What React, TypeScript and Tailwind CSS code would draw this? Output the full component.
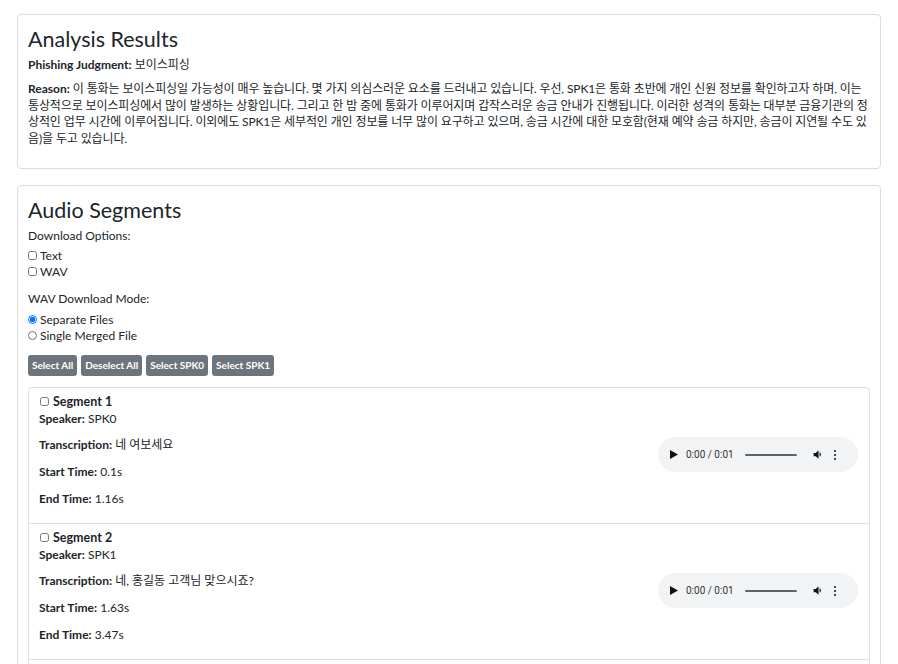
import type { ReactNode } from 'react';

const FONT = { fontFamily: 'Lato, "Noto Sans CJK KR", sans-serif' };

const REASON =
  '이 통화는 보이스피싱일 가능성이 매우 높습니다. 몇 가지 의심스러운 요소를 드러내고 있습니다. 우선, SPK1은 통화 초반에 개인 신원 정보를 확인하고자 하며, 이는 통상적으로 보이스피싱에서 많이 발생하는 상황입니다. 그리고 한 밤 중에 통화가 이루어지며 갑작스러운 송금 안내가 진행됩니다. 이러한 성격의 통화는 대부분 금융기관의 정상적인 업무 시간에 이루어집니다. 이외에도 SPK1은 세부적인 개인 정보를 너무 많이 요구하고 있으며, 송금 시간에 대한 모호함(현재 예약 송금 하지만, 송금이 지연될 수도 있음)을 두고 있습니다.';

const segments = [
  { id: 1, speaker: 'SPK0', text: '네 여보세요', start: '0.1s', end: '1.16s' },
  { id: 2, speaker: 'SPK1', text: '네, 홍길동 고객님 맞으시죠?', start: '1.63s', end: '3.47s' },
  { id: 3, speaker: 'SPK0', text: '네 맞는데요', start: '3.9s', end: '4.72s' },
];

function Card({ title, children }: { title: string; children: ReactNode }) {
  return (
    <div className="border border-[#dcdcdc] rounded-[4px] bg-white px-[10px] pt-[12px] pb-[11px]">
      <h2 className="text-[21.5px] leading-[25px] font-normal mb-[4px]">{title}</h2>
      {children}
    </div>
  );
}

function AudioPlayer() {
  return (
    <div className="flex items-center w-[200px] h-[35px] rounded-full bg-[#f1f3f4] text-[#1f1f1f]">
      <svg className="ml-[12px] w-[8px] h-[9px]" viewBox="0 0 8 9">
        <path d="M0 0 L8 4.5 L0 9 Z" fill="#111" />
      </svg>
      <span className="ml-[8px] text-[10px] leading-none text-[#333] font-['Roboto']">0:00 / 0:01</span>
      <div className="ml-[11px] w-[52px] h-[2px] bg-[#5f6368] rounded-full" />
      <svg className="ml-[15px] w-[13px] h-[13px]" viewBox="0 0 24 24">
        <path d="M3 9v6h4l5 5V4L7 9H3z" fill="#111" />
        <path d="M16.5 12c0-1.77-1.02-3.29-2.5-4.03v8.05c1.48-.73 2.5-2.25 2.5-4.02z" fill="#111" />
      </svg>
      <div className="ml-[9px] flex flex-col gap-[1.5px]">
        <span className="w-[2.5px] h-[2.5px] rounded-full bg-[#111]" />
        <span className="w-[2.5px] h-[2.5px] rounded-full bg-[#111]" />
        <span className="w-[2.5px] h-[2.5px] rounded-full bg-[#111]" />
      </div>
    </div>
  );
}

export default function App() {
  return (
    <div style={FONT} className="min-h-screen bg-white text-[#212529] text-[12px] px-[17px] pt-[14px] pb-[20px]">
      <Card title="Analysis Results">
        <p className="leading-[17px] mb-[8px]">
          <strong className="font-bold">Phishing Judgment:</strong> 보이스피싱
        </p>
        <p className="leading-[16.7px] mb-[9px] tracking-[-0.12px]">
          <strong className="font-bold tracking-normal">Reason:</strong> {REASON}
        </p>
      </Card>

      <div className="mt-[16px]">
        <Card title="Audio Segments">
          <div className="leading-[17px] mb-[4px]">Download Options:</div>
          <label className="flex items-center h-[16px]">
            <input type="checkbox" className="m-0 mr-[3px] w-[9px] h-[9px]" />
            Text
          </label>
          <label className="flex items-center h-[16px] mb-[10px]">
            <input type="checkbox" className="m-0 mr-[3px] w-[9px] h-[9px]" />
            WAV
          </label>
          <div className="leading-[17px] mb-[5px]">WAV Download Mode:</div>
          <label className="flex items-center h-[16px]">
            <input type="radio" name="mode" defaultChecked className="m-0 mr-[3px] w-[9px] h-[9px]" />
            Separate Files
          </label>
          <label className="flex items-center h-[16px] mb-[11px]">
            <input type="radio" name="mode" className="m-0 mr-[3px] w-[9px] h-[9px]" />
            Single Merged File
          </label>
          <div className="flex gap-[4px] mb-[11px]">
            {['Select All', 'Deselect All', 'Select SPK0', 'Select SPK1'].map((label) => (
              <button
                key={label}
                type="button"
                className="h-[21px] px-[4px] rounded-[3px] bg-[#6c757d] text-white text-[10px] font-bold"
              >
                {label}
              </button>
            ))}
          </div>

          <div className="border border-[#dfdfdf] rounded-[4px]">
            {segments.map((seg, i) => (
              <div
                key={seg.id}
                className={`flex items-center justify-between pl-[10px] pr-[11px] pt-[5px] pb-[6px] ${i > 0 ? 'border-t border-[#dfdfdf]' : ''}`}
              >
                <div>
                  <label className="flex items-center leading-[17px] text-[12.5px] font-bold">
                    <input type="checkbox" className="m-0 ml-[1px] mr-[4px] w-[9px] h-[9px]" />
                    Segment {seg.id}
                  </label>
                  <p className="leading-[17px] mb-[9px]">
                    <strong className="font-bold">Speaker:</strong> {seg.speaker}
                  </p>
                  <p className="leading-[17px] mb-[10px]">
                    <strong className="font-bold">Transcription:</strong> {seg.text}
                  </p>
                  <p className="leading-[17px] mb-[10px]">
                    <strong className="font-bold">Start Time:</strong> {seg.start}
                  </p>
                  <p className="leading-[17px] mb-[10px]">
                    <strong className="font-bold">End Time:</strong> {seg.end}
                  </p>
                </div>
                <AudioPlayer />
              </div>
            ))}
          </div>
        </Card>
      </div>
    </div>
  );
}
